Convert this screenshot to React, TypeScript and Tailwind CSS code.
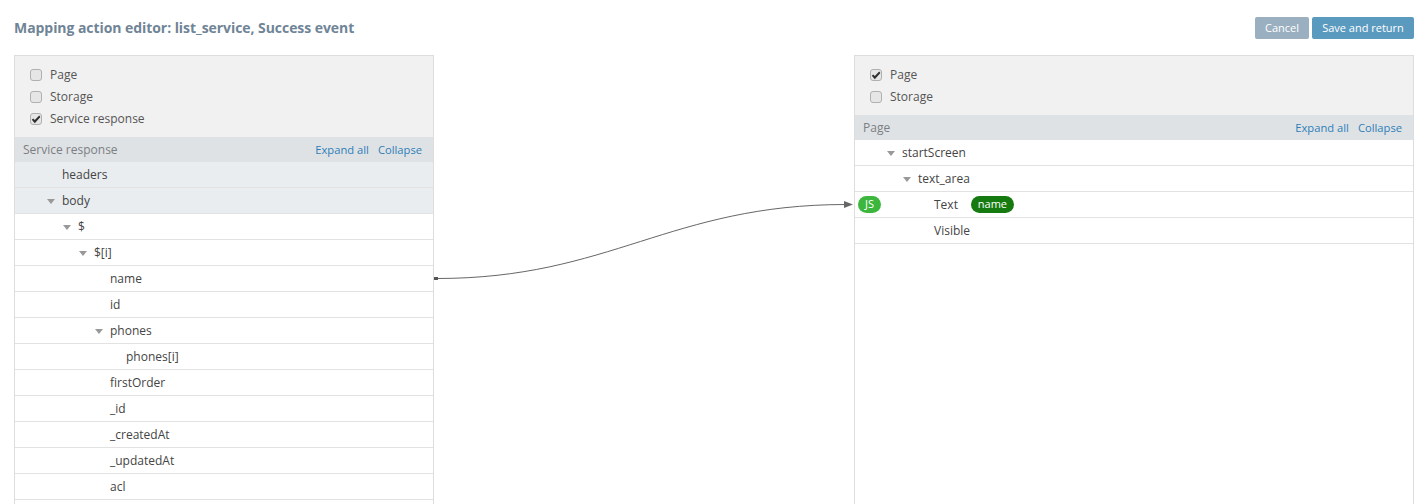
type Row = { label: string; depth: number; open?: boolean; shaded?: boolean }

const sourceRows: Row[] = [
  { label: 'headers', depth: 0, shaded: true },
  { label: 'body', depth: 0, open: true, shaded: true },
  { label: '$', depth: 1, open: true },
  { label: '$[i]', depth: 2, open: true },
  { label: 'name', depth: 3 },
  { label: 'id', depth: 3 },
  { label: 'phones', depth: 3, open: true },
  { label: 'phones[i]', depth: 4 },
  { label: 'firstOrder', depth: 3 },
  { label: '_id', depth: 3 },
  { label: '_createdAt', depth: 3 },
  { label: '_updatedAt', depth: 3 },
  { label: 'acl', depth: 3 },
  { label: '', depth: 3 },
]

function CheckItem({ label, checked }: { label: string; checked?: boolean }) {
  return (
    <div className="flex h-[22px] items-center gap-[8px] text-[#555]">
      <span className="flex h-[12px] w-[12px] items-center justify-center rounded-[3px] border border-[#b0b0b0] bg-[#e6e6e6]">
        {checked && (
          <svg width="10" height="9" viewBox="0 0 10 9">
            <path d="M0.8 4.8L2.2 3.4L3.8 5L8.2 0.6L9.4 2L3.8 8.2z" fill="#2f2f2f" />
          </svg>
        )}
      </span>
      {label}
    </div>
  )
}

function PanelBar({ title }: { title: string }) {
  return (
    <div className="flex h-[25px] items-center justify-between bg-[#dfe2e5] pl-2 pr-[11px] text-[#7b7f83]">
      <span>{title}</span>
      <div className="flex gap-[9px] pt-[1px] text-[11.2px] text-[#2d7fb8]">
        <span>Expand all</span>
        <span>Collapse</span>
      </div>
    </div>
  )
}

function TreeRow({ row, children }: { row: Row; children?: React.ReactNode }) {
  return (
    <div
      className={`relative flex h-[26px] items-center border-b border-[#e2e2e2] text-[#444] ${row.shaded ? 'bg-[#e9edf0]' : 'bg-white'}`}
      style={{ paddingLeft: 47 + row.depth * 16 }}
    >
      {row.open && (
        <svg className="absolute top-[11px]" style={{ left: 32 + row.depth * 16 }} width="8" height="5" viewBox="0 0 8 5">
          <path d="M0 0h8L4 5z" fill="#999" />
        </svg>
      )}
      <span>{row.label}</span>
      {children}
    </div>
  )
}

export default function App() {
  return (
    <div className="relative h-[504px] w-[1422px] overflow-hidden bg-white pl-[14px] pr-[8px] text-[12px] font-['Open_Sans',sans-serif]">
      {/* Header */}
      <div className="flex h-[55px] items-center justify-between">
        <h1 className="text-[14px] font-bold tracking-[-0.06px] text-[#6f8496]">Mapping action editor: list_service, Success event</h1>
        <div className="flex gap-[3px] text-[11px] text-white">
          <button className="h-[22px] w-[54px] rounded-[2px] bg-[#9aafbf] pt-[1px]">Cancel</button>
          <button className="h-[22px] w-[102px] rounded-[2px] bg-[#5b9abf] pt-[1px]">Save and return</button>
        </div>
      </div>

      <div className="flex items-start justify-between">
        {/* Source */}
        <div className="w-[420px] border-x border-t border-[#dddddd]">
          <div className="bg-[#f1f1f1] pb-[7px] pl-[15px] pt-[8px]">
            <CheckItem label="Page" />
            <CheckItem label="Storage" />
            <CheckItem label="Service response" checked />
          </div>
          <PanelBar title="Service response" />
          {sourceRows.map((row, i) => (
            <TreeRow key={i} row={row} />
          ))}
        </div>

        {/* Target */}
        <div className="h-[460px] w-[560px] border-x border-t border-[#dddddd]">
          <div className="bg-[#f1f1f1] pb-[7px] pl-[15px] pt-[8px]">
            <CheckItem label="Page" checked />
            <CheckItem label="Storage" />
          </div>
          <PanelBar title="Page" />
          <TreeRow row={{ label: 'startScreen', depth: 0, open: true }} />
          <TreeRow row={{ label: 'text_area', depth: 1, open: true }} />
          <TreeRow row={{ label: 'Text', depth: 2 }}>
            <span className="absolute left-[3px] top-[4px] flex h-[17px] w-[23px] items-center justify-center rounded-full bg-[#3cb63c] text-[11px] text-white">
              JS
            </span>
            <span className="ml-[13px] flex h-[17px] w-[43px] items-center justify-center rounded-full bg-[#157a10] text-[11px] font-medium text-white">
              name
            </span>
          </TreeRow>
          <TreeRow row={{ label: 'Visible', depth: 2 }} />
        </div>
      </div>

      {/* Connector */}
      <svg className="absolute left-0 top-0" width="1422" height="504" fill="none">
        <path d="M437 278.5C610 278.5 670 204.5 846 204.5" stroke="#666" strokeWidth="1" />
        <rect x="434" y="277" width="4" height="3" fill="#555" />
        <path d="M844 201L853 204.5L844 208z" fill="#666" />
      </svg>
    </div>
  )
}
